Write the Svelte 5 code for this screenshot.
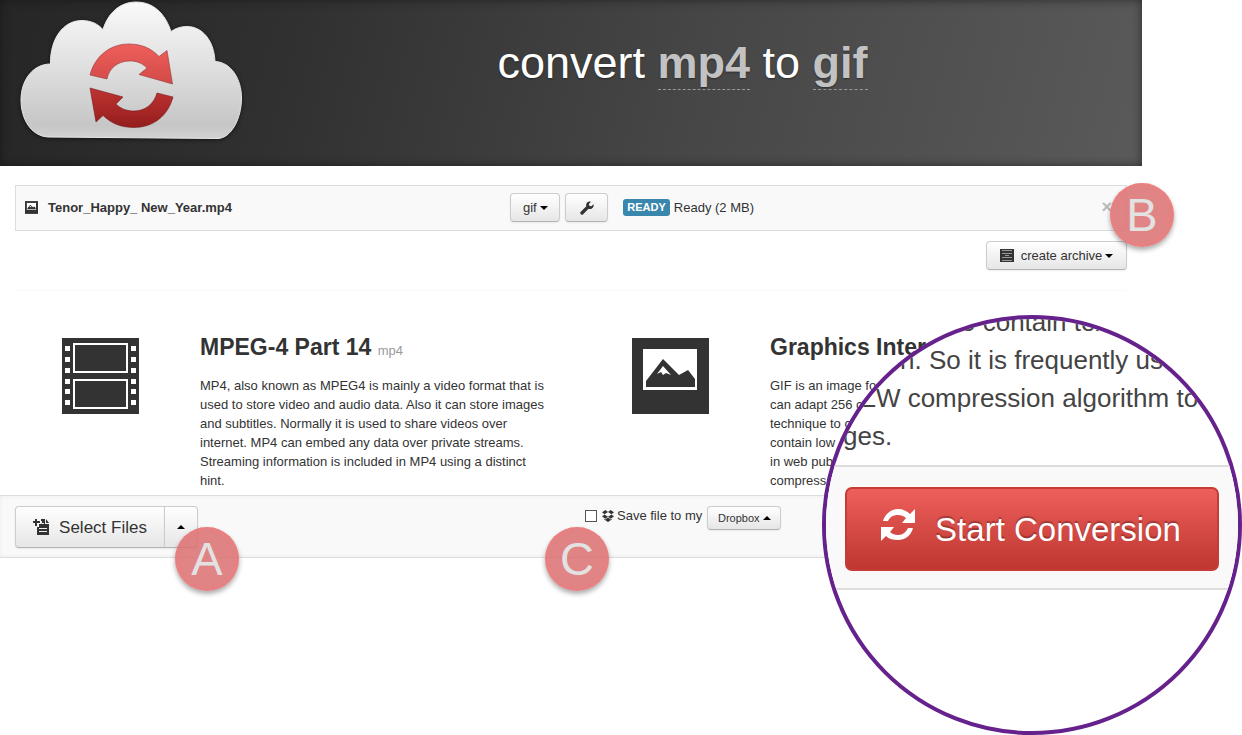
<script>
  const formats = [
    {
      icon: 'film',
      name: 'MPEG-4 Part 14',
      ext: 'mp4',
      text: 'MP4, also known as MPEG4 is mainly a video format that is used to store video and audio data. Also it can store images and subtitles. Normally it is used to share videos over internet. MP4 can embed any data over private streams. Streaming information is included in MP4 using a distinct hint.'
    },
    {
      icon: 'image',
      name: 'Graphics Inter',
      ext: '',
      lines: ['GIF is an image fo', 'can adapt 256 c', 'technique to c', 'contain low', 'in web pub', 'compress']
    }
  ];
  let saveFile = $state(false);
</script>

{#snippet caret(up)}
  <svg class="caret" viewBox="0 0 8 4" aria-hidden="true"><path d={up ? 'M0 4L4 0L8 4Z' : 'M0 0L4 4L8 0Z'} /></svg>
{/snippet}

{#snippet picture(cls)}
  <svg class={cls} viewBox="0 0 77 76" aria-hidden="true">
    <path fill="#333" d="M0 0H77V76H0Z" />
    <path fill="#fff" d="M11 11H65V52H11Z" />
    <path fill="#333" d="M14 49V43L31 21L47 37L56 32L63 41V49Z" />
    <path fill="#fff" d="M25 36L31 28L39 37L34 35L31 37L29 34Z" />
  </svg>
{/snippet}

<div class="page">
  <header>
    <svg class="logo" viewBox="20 0 223 142" role="img" aria-label="Cloud converter">
      <defs>
        <linearGradient id="cloud" x1="0" y1="0" x2="0" y2="1">
          <stop offset="0" stop-color="#fafafa" />
          <stop offset=".5" stop-color="#dedede" />
          <stop offset=".9" stop-color="#c6c6c6" />
          <stop offset="1" stop-color="#d2d2d2" />
        </linearGradient>
        <linearGradient id="arrowTop" x1="0" y1="0" x2="0" y2="1">
          <stop offset="0" stop-color="#ee5f5b" />
          <stop offset="1" stop-color="#d24a47" />
        </linearGradient>
        <linearGradient id="arrowBottom" x1="0" y1="0" x2="0" y2="1">
          <stop offset="0" stop-color="#be3432" />
          <stop offset="1" stop-color="#951d1d" />
        </linearGradient>
      </defs>
      <path
        fill="url(#cloud)" stroke="#e6e6e6"
        d="M48 137C31 136 21 119 21 100C21 80 33 64 50.500 64C50 39 63 20.500 82 20.500C91 20.500 98 24 103 29.500C108 13 120 2 136 2C153 2 165 13 171 31.500C176 28 181 26.500 187 26.500C202 26.500 214 40 215 61.500C231 62 241.500 79 241.500 98C241.500 119 231 138 218 138.500Z"
      />
      <path fill="url(#arrowTop)" stroke="#8f3b39" stroke-width=".6" d="M90 75C95 56 110 44 129 44C141 44 151 48 159 56.500L167 50.500L172.500 84L139 74.500L147 68C142 63 137 61 130 61C118 61 109 68 107 79Z" />
      <path fill="url(#arrowBottom)" stroke="#731b1b" stroke-width=".6" d="M90 88L123 97L116 104C121 109 127 111 134 111C145 111 154 104 157 93L173 97C168 116 153 127.500 134 127.500C122 127.500 112 124 103 115.500L96 122Z" />
    </svg>
    <h1>convert <a href="#mp4">mp4</a> to <a href="#gif">gif</a></h1>
  </header>

  <main>
    <section class="file">
      <div class="name">{@render picture('tiny')}<strong>Tenor_Happy_ New_Year.mp4</strong></div>
      <div class="state">
        <button class="btn format">gif{@render caret(false)}</button>
        <button class="btn tool" aria-label="Options">
          <svg viewBox="0 0 14 14" width="14" height="14" aria-hidden="true">
            <path fill="#333" d="M13.500 3.200L11.300 5.200L9.300 4.800L8.900 2.900L10.900.7C8.800 0 6.700 1.100 6.200 3.200C6 4 6.100 4.700 6.300 5.300L.8 10.700C-.1 11.600.1 12.700.8 13.300C1.500 14 2.500 13.900 3.200 13.200L8.500 7.800C9.300 8.100 10.200 8.200 11.100 7.900C13.100 7.300 14.100 5.200 13.500 3.200Z" />
          </svg>
        </button>
        <span class="badge">READY</span><span>Ready (2 MB)</span>
        <button class="close" aria-label="Remove file">×</button>
      </div>
      <span class="marker b">B</span>
    </section>

    <div class="archive">
      <button class="btn create">
        <svg viewBox="0 0 14 13" width="14" height="13" aria-hidden="true">
          <path fill="#333" d="M0 0H14V13H0Z" />
          <path fill="none" stroke="#999" d="M2 1.500H12M2 4.500H12M2 8.500H12M2 11.500H12M5 6.500H9" />
        </svg>
        <span>create archive</span>{@render caret(false)}
      </button>
    </div>

    <div class="formats">
      {#each formats as f}
        <article>
          {#if f.icon === 'film'}
            <svg class="big" viewBox="0 0 77 76" aria-hidden="true">
              <path fill="#333" d="M0 0H77V76H0Z" />
              <path fill="none" stroke="#fff" stroke-width="2" d="M12 6H65V34H12ZM12 42H65V70H12Z" />
              {#each [8, 19, 30, 41, 51, 62] as y}
                <path fill="#fff" d="M3 {y}h5v5h-5zM69 {y}h5v5h-5z" />
              {/each}
            </svg>
          {:else}
            {@render picture('big')}
          {/if}
          <div>
            <h2>{f.name} <small>{f.ext}</small></h2>
            {#if f.lines}
              <p>{#each f.lines as line}<span class="line">{line}</span>{/each}</p>
            {:else}
              <p>{f.text}</p>
            {/if}
          </div>
        </article>
      {/each}
    </div>
  </main>

  <footer>
    <div class="select">
      <button class="btn files">
        <svg viewBox="0 0 17 17" width="17" height="17" aria-hidden="true">
          <path fill="#333" d="M2 0H4V2H7V4H4V7H2V4H0V2H2ZM8 0H12V5H16V16H4V8H6V5H8ZM13 0L16 4H13Z" />
          <path stroke="#eee" fill="none" d="M6 9.500H14M6 12.500H14M8.500 2V4.500H11" />
        </svg>
        Select Files
      </button>
      <button class="btn toggle" aria-label="More sources">{@render caret(true)}</button>
      <span class="marker a">A</span>
    </div>
    <div class="save">
      <input id="save" type="checkbox" bind:checked={saveFile} />
      <label for="save">
        <svg viewBox="0 0 12 12" width="12" height="12" aria-hidden="true">
          <path fill="#333" d="M3.500 0L6 2L2.500 4.300L0 2.300ZM8.500 0L12 2.300L9.500 4.300L6 2ZM0 6.500L2.500 4.500L6 6.800L3.500 8.800ZM12 6.500L9.500 4.500L6 6.800L8.500 8.800ZM6 7.600L8.500 9.600L9.800 8.800V9.600L6 12L2.200 9.600V8.800L3.500 9.600Z" />
        </svg>
        Save file to my
      </label>
      <button class="btn dropbox">Dropbox{@render caret(true)}</button>
      <span class="marker c">C</span>
    </div>
  </footer>

  <aside class="lens">
    <p>
      <span class="l1">o contain tex</span>
      <span class="l2">n. So it is frequently us</span>
      <span class="l3">ZW compression algorithm to</span>
      <span class="l4">ges.</span>
    </p>
    <div class="lensbar">
      <button class="start">
        <svg viewBox="0 0 34 33" width="34" height="33" aria-hidden="true">
          <path fill="#fff" d="M2 12C4 5 10 0 17 0C22 0 26 2 29 5L34 0V14H21L25 9C23 7 20 6 17 6C12 6 9 8 7 12ZM32 19C30 27 24 31 17 31C12 31 8 30 5 27L0 32V18H13L9 23C11 25 14 26 17 26C22 26 25 23 27 19Z" />
        </svg>
        Start Conversion
      </button>
    </div>
  </aside>
</div>

<style>
  :global(body) { margin: 0; background: #fff; }
  .page { position: relative; min-height: 735px; padding-right: 100px; overflow: hidden; font: 13px/19px "Liberation Sans", Arial, sans-serif; color: #333; }
  button { font: inherit; color: inherit; margin: 0; }
  header { display: flex; align-items: flex-start; height: 166px; padding: 0 20px; box-sizing: border-box; background: linear-gradient(105deg, #262626, #303030 25%, #464646 60%, #5a5a5a); box-shadow: inset 0 0 10px #1119; }
  .logo { width: 223px; height: 142px; filter: drop-shadow(0 1px 2px #0008); }
  h1 { flex: 1; margin: 36px 0 0; text-align: center; font-size: 45px; line-height: 53px; font-weight: 400; color: #fff; text-shadow: 0 1px 2px #0006; }
  h1 a { display: inline-block; font-weight: 700; color: #c2c2c2; text-decoration: none; border-bottom: 1px dashed #999; }
  main { padding: 19px 15px 0; }
  .file { position: relative; display: grid; grid-template-columns: 4fr 5fr; align-items: center; height: 46px; box-sizing: border-box; padding: 0 9px 1px; border: 1px solid #ddd; background: #f9f9f9; }
  .name, .state { display: flex; align-items: center; }
  .name { gap: 10px; }
  .tiny { width: 13px; height: 13px; }
  .btn { display: flex; align-items: center; justify-content: center; box-sizing: border-box; height: 29px; padding: 0; border: 1px solid #ccc; border-bottom-color: #b3b3b3; border-radius: 4px; background: linear-gradient(#fff, #e6e6e6); box-shadow: 0 1px 2px #0001; }
  .caret { width: 8px; height: 4px; margin-left: 3px; fill: #000; }
  .format { width: 50px; margin-right: 5px; }
  .tool { width: 43px; margin-right: 15px; }
  .badge { padding: 0 4px; margin-right: 4px; border-radius: 3px; background: #3a87ad; color: #fff; font-size: 11px; line-height: 17px; font-weight: 700; }
  .close { margin-left: auto; padding: 0 5px; border: 0; background: none; color: #bbb; font-size: 18px; font-weight: 700; }
  .archive { display: flex; justify-content: flex-end; padding: 10px 0 20px; border-bottom: 1px solid #fafafa; }
  .create { width: 141px; }
  .create span { margin-left: 7px; }
  .formats { display: grid; grid-template-columns: 1fr 1fr; gap: 28px; padding-top: 43px; }
  article { display: flex; gap: 61px; padding-left: 47px; }
  article p { max-width: 353px; }
  .big { flex: none; width: 77px; height: 76px; margin-top: 4px; }
  h2 { margin: 0 0 12px; font-size: 23px; line-height: 26px; white-space: nowrap; }
  small { font-size: 13px; font-weight: 400; color: #999; }
  p { margin: 0; }
  .line { display: block; white-space: nowrap; }
  footer { display: grid; grid-template-columns: 1fr 1fr; gap: 28px; align-items: start; margin-top: 5px; padding: 10px 15px 9px; border: solid #ddd; border-width: 1px 0; background: #f9f9f9; box-shadow: inset 0 0 4px #0001; }
  .select, .save { position: relative; display: flex; }
  .files { width: 150px; height: 42px; gap: 9px; font-size: 17px; border-radius: 4px 0 0 4px; }
  .toggle { width: 34px; height: 42px; margin-left: -1px; border-radius: 0 4px 4px 0; }
  .toggle .caret { margin: 0; }
  .save { align-items: flex-start; height: 24px; }
  input { appearance: none; box-sizing: border-box; width: 12px; height: 12px; margin: 4px 5px 0 0; border: 1px solid #555; background: #fff; }
  input:checked { background: #333; }
  label { display: flex; align-items: center; gap: 3px; margin-right: 5px; line-height: 20px; }
  .dropbox { width: 74px; height: 24px; font-size: 11px; }
  .marker { position: absolute; z-index: 1; width: 64px; height: 64px; border-radius: 50%; background: #dc6e70d9; box-shadow: inset 0 0 5px #f77a, 0 3px 5px #0005; color: #e2e2e2; font-size: 47px; line-height: 64px; text-align: center; }
  .a { left: 160px; top: 21px; }
  .b { right: -48px; top: -3px; }
  .c { left: -40px; top: 21px; }
  .lens { position: absolute; z-index: 2; right: 0; top: 315px; width: 420px; height: 420px; box-sizing: border-box; overflow: hidden; border: 4px solid #65218c; border-radius: 50%; background: #fff; }
  .lens p { margin: -16px 0 10px; font-size: 26px; line-height: 38px; white-space: nowrap; color: #444; }
  .lens span { display: block; }
  .l1 { padding-left: 135px; }
  .l2 { padding-left: 74px; }
  .l3 { padding-left: 34px; }
  .l4 { padding-left: 17px; }
  .lensbar { padding: 20px 19px 17px; border: solid #ddd; border-width: 2px 0; background: #f9f9f9; }
  .start { display: flex; align-items: center; justify-content: center; gap: 20px; width: 100%; height: 84px; padding: 0 2px 0 0; border: 2px solid #c43c35; border-radius: 7px; background: linear-gradient(#ee5f5b, #bd362f); color: #fff; font-size: 33px; text-shadow: 0 -2px 1px #0004; }
  .start svg { margin-bottom: 8px; }
</style>
